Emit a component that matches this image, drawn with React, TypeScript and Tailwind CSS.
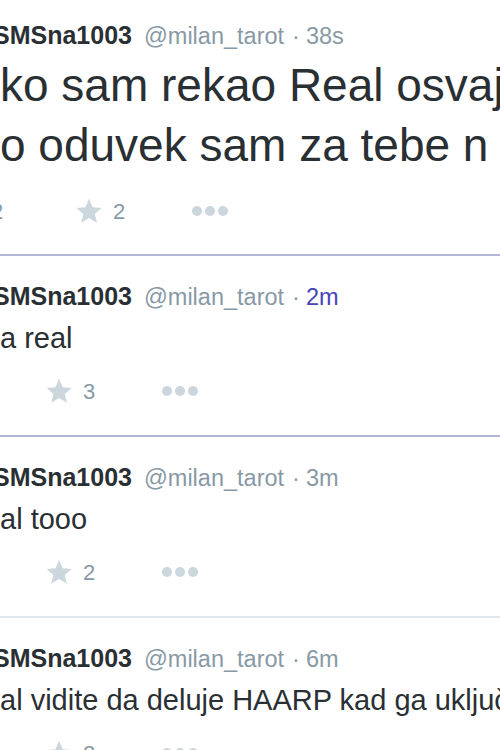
import React from "react";

const Star = () => (
  <svg viewBox="0 0 24 24" className="w-[28px] h-[28px] fill-[#ccd6dd]">
    <path d="M12 1.6l3.2 7.1 7.6.7-5.8 5.1 1.8 7.5L12 18l-6.6 4 1.8-7.5L1.4 9.4 9 8.7z" />
  </svg>
);

const Dots = () => (
  <div className="flex items-center gap-[3px]">
    <span className="w-[10px] h-[10px] rounded-full bg-[#ccd6dd]" />
    <span className="w-[10px] h-[10px] rounded-full bg-[#ccd6dd]" />
    <span className="w-[10px] h-[10px] rounded-full bg-[#ccd6dd]" />
  </div>
);

type TweetProps = {
  time: string;
  timeLink?: boolean;
  big?: boolean;
  lines: string[];
  favs: string;
  retweets?: string;
  border: string;
};

const Tweet = ({ time, timeLink, big, lines, favs, retweets, border }: TweetProps) => {
  return (
    <div className={big ? "pt-5 pb-[28px] border-b-2 " + border : "pt-[25px] pb-[29px] border-b-2 " + border}>
      <div className="flex items-baseline whitespace-nowrap leading-[30px]">
        <span className="-ml-[7px] text-[25px] font-bold text-[#292f33]">SMSna1003</span>
        <span className="ml-[12px] text-[23.5px] text-[#8899a6]">@milan_tarot</span>
        <span className="ml-[8px] text-[23.5px] text-[#8899a6]">·</span>
        <span className={timeLink ? "ml-[6px] text-[23.5px] text-[#4545b8]" : "ml-[6px] text-[23.5px] text-[#8899a6]"}>
          {time}
        </span>
      </div>
      <div
        className={
          big
            ? "mt-[4px] text-[46px] leading-[60px] text-[#292f33] whitespace-nowrap"
            : "mt-[8px] text-[29px] leading-[36px] text-[#292f33] whitespace-nowrap"
        }
      >
        {lines.map((l) => (
          <div key={l}>{l}</div>
        ))}
      </div>
      <div className={big ? "mt-[21px] flex items-center h-[30px]" : "mt-[20px] flex items-center h-[30px]"}>
        {retweets ? (
          <span className="-ml-[9px] w-[84px] text-[22px] text-[#8899a6]">{retweets}</span>
        ) : (
          <span className="w-[45px]" />
        )}
        <div className="flex items-center w-[117px]">
          <Star />
          <span className="ml-[10px] text-[22px] text-[#8899a6]">{favs}</span>
        </div>
        <Dots />
      </div>
    </div>
  );
};

export default function App() {
  return (
    <div className="w-[500px] h-[750px] overflow-hidden bg-white font-['Liberation_Sans',Arial,sans-serif]">
      <Tweet
        big
        time="38s"
        lines={["ko sam rekao Real osvaja", "o oduvek sam za tebe n"]}
        retweets="2"
        favs="2"
        border="border-[#b4b4d6]"
      />
      <Tweet time="2m" timeLink lines={["a real"]} favs="3" border="border-[#b4b4d6]" />
      <Tweet time="3m" lines={["al tooo"]} favs="2" border="border-[#e1e8ed]" />
      <Tweet
        time="6m"
        lines={["al vidite da deluje HAARP kad ga uključi"]}
        favs="2"
        border="border-[#e1e8ed]"
      />
    </div>
  );
}
